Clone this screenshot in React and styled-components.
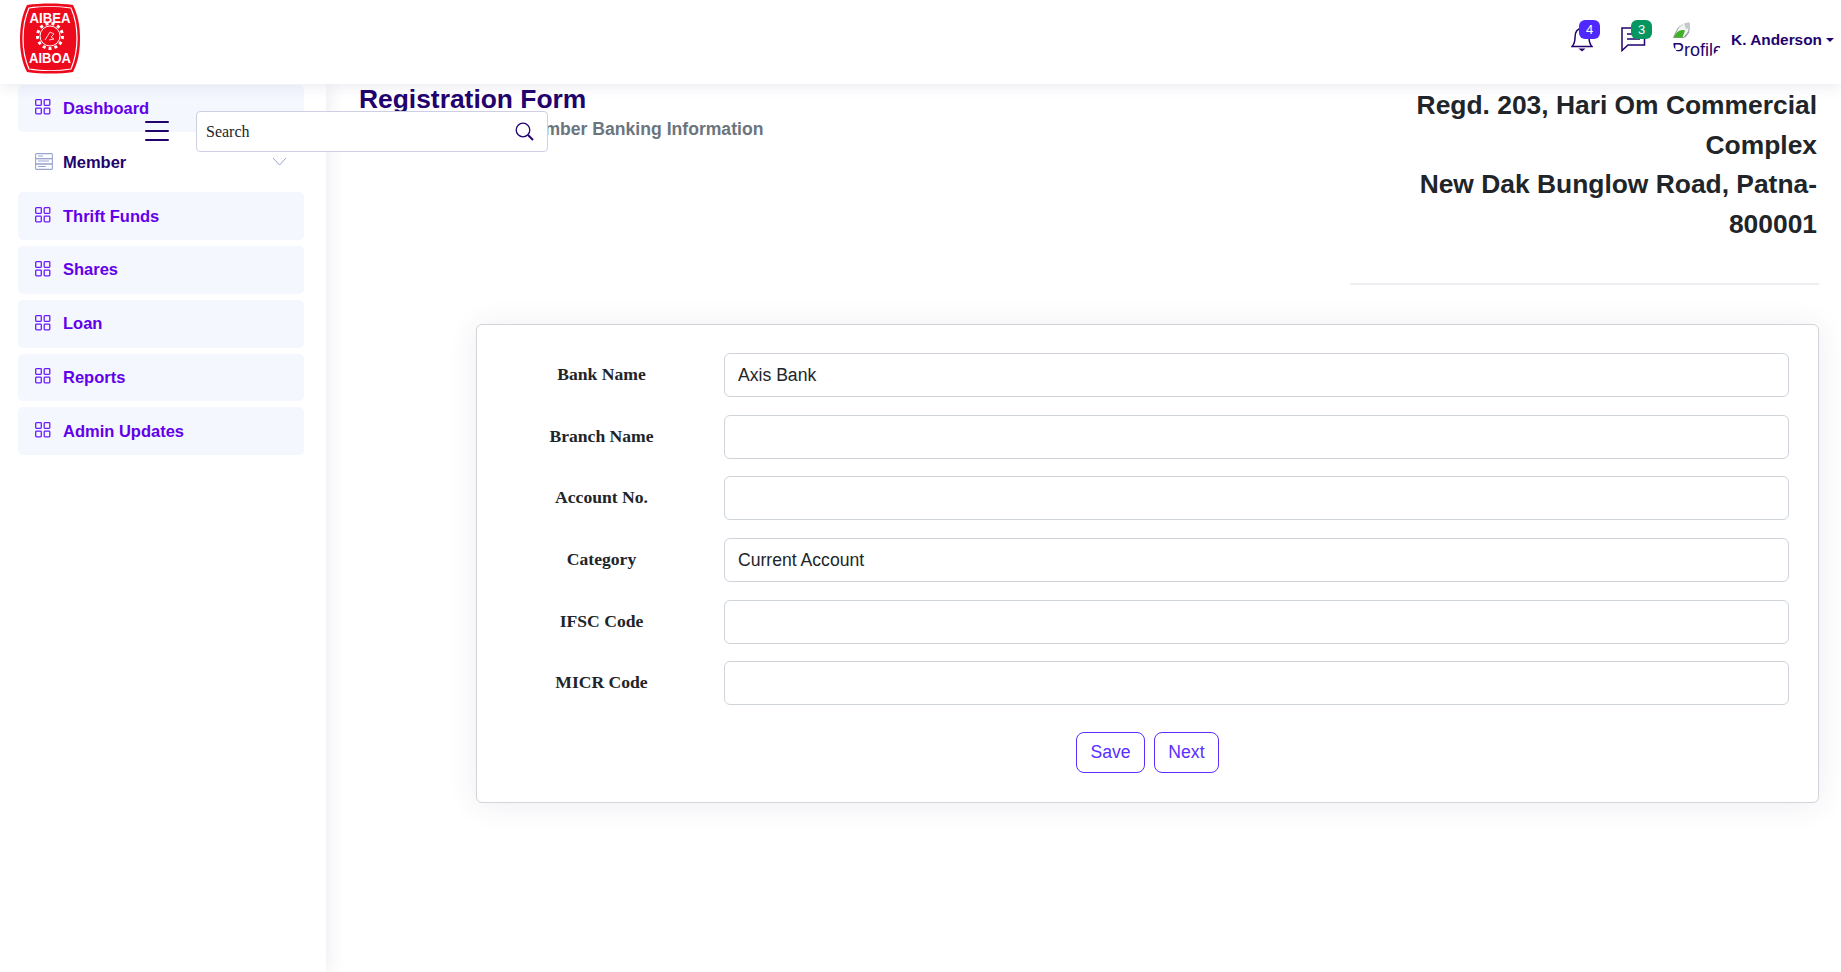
import React from "react"
import styled, { createGlobalStyle } from "styled-components"

const Global = createGlobalStyle`
  html, body { margin: 0; padding: 0; height: 100%; background: #fff; overflow: hidden; }
  * { box-sizing: border-box; }
  body { font-family: "Liberation Sans", Arial, sans-serif; color: #212529; }
`

const Page = styled.div`
  display: flex;
  flex-direction: column;
  height: 972px;
  overflow: hidden;
`

const Header = styled.header`
  position: relative;
  z-index: 10;
  flex: 0 0 84px;
  display: flex;
  align-items: center;
  justify-content: space-between;
  padding: 0 7px 0 20px;
  background: #fff;
  box-shadow: 0 2px 14px rgba(50, 50, 110, 0.1);
`

const LogoWrap = styled.div`
  display: flex;
  width: 60px;
  height: 84px;
  align-items: flex-start;
  padding-top: 3px;
`

const Burger = styled.button`
  position: absolute;
  left: 145px;
  top: 121px;
  width: 24px;
  height: 20px;
  padding: 0;
  border: 0;
  background: none;
  display: flex;
  flex-direction: column;
  justify-content: space-between;
  span { display: block; height: 2px; background: #22036e; border-radius: 1px; }
`

const SearchBox = styled.div`
  position: absolute;
  left: 196px;
  top: 111px;
  width: 352px;
  height: 41px;
  display: flex;
  align-items: center;
  justify-content: space-between;
  padding: 0 13px 0 9px;
  background: #fff;
  border: 1px solid #cfcfe4;
  border-radius: 4px;
  font-family: "Liberation Serif", serif;
  font-size: 16px;
  color: #212529;
`

const HeaderRight = styled.div`
  display: flex;
  align-items: center;
  height: 84px;
  padding-bottom: 4px;
`

const IconLink = styled.div`
  position: relative;
  width: ${p => p.$w}px;
  height: 40px;
  display: flex;
  align-items: center;
  color: #22036e;
`

const Badge = styled.span`
  position: absolute;
  top: 0;
  left: ${p => p.$left}px;
  width: 21px;
  height: 19px;
  border-radius: 6px;
  background: ${p => p.$bg};
  color: #fff;
  font-size: 13px;
  display: flex;
  align-items: center;
  justify-content: center;
`

const Avatar = styled.div`
  width: 50px;
  height: 38px;
  margin-right: 9px;
  border-radius: 50%;
  overflow: hidden;
  color: #22036e;
  font-size: 18px;
  line-height: 20px;
  white-space: nowrap;
  svg { display: block; margin: 1px 0 1px 1px; }
`

const UserName = styled.div`
  display: flex;
  align-items: center;
  gap: 4px;
  font-size: 15.4px;
  font-weight: 700;
  color: #22036e;
  &::after {
    content: "";
    border-top: 4px solid #22036e;
    border-left: 4px solid transparent;
    border-right: 4px solid transparent;
  }
`

const Body = styled.div`
  flex: 1;
  display: flex;
  min-height: 0;
`

const Sidebar = styled.aside`
  flex: 0 0 326px;
  display: flex;
  flex-direction: column;
  gap: 6px;
  padding: 0.6px 22px 0 18px;
  background: #fff;
  box-shadow: 3px 0 16px rgba(50, 50, 110, 0.09);
  position: relative;
  z-index: 1;
`

const NavItem = styled.div`
  height: 47.8px;
  display: flex;
  align-items: center;
  gap: ${p => (p.$plain ? 10 : 12)}px;
  padding: 0 17px;
  border-radius: 5px;
  background: ${p => (p.$plain ? "#fff" : "#f5f7ff")};
  color: ${p => (p.$plain ? "#22036e" : "#6200ea")};
  font-size: 16.5px;
  font-weight: 700;
  svg { position: relative; top: -1px; }
  svg:last-child:not(:first-child) { margin-left: auto; }
`

const Main = styled.main`
  flex: 1;
  min-width: 0;
  padding: 0 22px 0 33px;
`

const TopRow = styled.div`
  height: 201px;
  display: flex;
  justify-content: space-between;
`

const Titles = styled.div`
  padding-top: 0;
`

const Title = styled.h1`
  margin: -1px 0 0;
  font-size: 26.4px;
  line-height: 32px;
  font-weight: 700;
  color: #22036e;
`

const SubTitle = styled.h2`
  margin: 4px 0 0 161px;
  font-size: 17.6px;
  line-height: 21px;
  font-weight: 700;
  color: #6c757d;
`

const Address = styled.div`
  width: 469px;
  height: 201px;
  padding: 2px 2px 0 0;
  border-bottom: 2px solid #eeeef2;
  text-align: right;
  font-size: 26.4px;
  line-height: 39.6px;
  font-weight: 700;
  color: #212529;
`

const Card = styled.form`
  margin: 39px 0 0 117px;
  height: 479px;
  padding: 28px 29px 0 0;
  background: #fff;
  border: 1px solid #d3d3d8;
  border-radius: 6px;
  box-shadow: 0 2px 30px rgba(50, 50, 110, 0.09);
`

const Row = styled.div`
  display: grid;
  grid-template-columns: 247px 1fr;
  align-items: center;
  margin-bottom: 17.7px;
`

const Label = styled.label`
  font-family: "Liberation Serif", serif;
  font-size: 17.6px;
  font-weight: 700;
  text-align: center;
  color: #212529;
  padding: 0 0 1px 2px;
`

const Input = styled.input`
  height: 44px;
  width: 100%;
  padding: 0 13px;
  border: 1px solid #ced4da;
  border-radius: 6px;
  background: #fff;
  font-family: "Liberation Sans", Arial, sans-serif;
  font-size: 17.6px;
  color: #212529;
  outline: none;
`

const Actions = styled.div`
  display: flex;
  justify-content: center;
  gap: 9px;
  margin: 26.600px 0 0 29px;
`

const Btn = styled.button`
  height: 41px;
  padding: 0 13.4px;
  border: 1px solid #5a2eff;
  border-radius: 8px;
  background: #fff;
  color: #5a2eff;
  font-family: "Liberation Sans", Arial, sans-serif;
  font-size: 17.6px;
`

const GridIcon = () => (
  <svg width="16" height="16" viewBox="0 0 16 16" fill="none" stroke="#6a1bff" strokeWidth="1.3">
    <rect x="0.7" y="0.7" width="5.6" height="5.6" rx="0.8" />
    <rect x="9.2" y="0.7" width="5.6" height="5.6" rx="0.8" />
    <rect x="0.7" y="9.2" width="5.6" height="5.6" rx="0.8" />
    <rect x="9.2" y="9.2" width="5.6" height="5.6" rx="0.8" />
  </svg>
)

const ServerIcon = () => (
  <svg width="18" height="17" viewBox="0 0 18 17" fill="none" stroke="#9aa5d1" strokeWidth="1.1">
    <rect x="0.6" y="0.6" width="16.8" height="5" rx="1" />
    <rect x="0.6" y="5.6" width="16.8" height="5.4" />
    <rect x="0.6" y="11" width="16.8" height="5.4" rx="1" />
    <path d="M3 3h5M3 8h11M3 13.5h8" />
  </svg>
)

const Chevron = () => (
  <svg width="15" height="9" viewBox="0 0 15 9" fill="none" stroke="#9aa5d1" strokeWidth="1">
    <path d="M1 1l6.5 7L14 1" />
  </svg>
)

const SearchIcon = () => (
  <svg width="19" height="19" viewBox="0 0 19 19" fill="none" stroke="#22036e" strokeWidth="1.3">
    <circle cx="8" cy="8" r="6.8" />
    <path d="M13 13l5 5" strokeWidth="2" />
  </svg>
)

const Bell = () => (
  <svg width="22" height="30" viewBox="0 0 22 30" fill="none" stroke="currentColor" strokeWidth="1.5">
    <path d="M1 21.5c2-2 3-5 3-9 0-6 3-9 7-9s7 3 7 9c0 4 1 7 3 9z" />
    <path d="M7.5 23.5h7l-3.5 3z" fill="currentColor" stroke="none" />
  </svg>
)

const Chat = () => (
  <svg width="26" height="26" viewBox="0 0 26 26" fill="none" stroke="currentColor" strokeWidth="1.5">
    <path d="M1 1h22.5v17H7l-6 5.5z" />
    <path d="M6 7h13M6 12h13" />
  </svg>
)

const BrokenImage = () => (
  <svg width="17" height="17" viewBox="0 0 17 17">
    <path d="M0.5 15.500 L5 6 L11 1 H16 V9 L11 15.500 z" fill="#f2f4f2" stroke="#8f969a" strokeWidth="1" />
    <path d="M1 15.500 C3 10 7 7 12 8.500 L9.500 15.500 z" fill="#43b02a" />
    <path d="M11 1 H16 V6 L13 7 z" fill="#c3c9cd" />
    <path d="M12 15.500 L16 10" stroke="#8f969a" strokeWidth="1" />
  </svg>
)

const Logo = () => (
  <svg width="60" height="71" viewBox="0 0 60 71">
    <path d="M7 2C20 0 40 0 53 2c5 10 7 21 7 33.500s-2 24-7 33.500C40 71 20 71 7 69 2 60 0 48 0 35.500S2 12 7 2z" fill="#ee0a1d" />
    <path d="M9 5c12-2 30-2 42 0 4 9 6 19 6 30.500s-2 21-6 30.500c-12 2-30 2-42 0-4-9-6-19-6-30.500S5 14 9 5z" fill="none" stroke="#fff" strokeWidth="1.2" />
    <text x="30" y="20" textAnchor="middle" fontFamily="Liberation Sans" fontWeight="700" fontSize="14" fill="#fff" textLength="41" lengthAdjust="spacingAndGlyphs">AIBEA</text>
    <text x="30" y="60" textAnchor="middle" fontFamily="Liberation Sans" fontWeight="700" fontSize="14" fill="#fff" textLength="42" lengthAdjust="spacingAndGlyphs">AIBOA</text>
    <circle cx="30" cy="33" r="12.500" fill="none" stroke="#fff" strokeWidth="3" strokeDasharray="3 3" />
    <circle cx="30" cy="33" r="10" fill="none" stroke="#fff" strokeWidth="1" />
    <path d="M25 37l5-8 4 2-3 3 3 2-5 1" fill="none" stroke="#fff" strokeWidth="0.8" />
  </svg>
)

const fields = [
  ["Bank Name", "Axis Bank"],
  ["Branch Name", ""],
  ["Account No.", ""],
  ["Category", "Current Account"],
  ["IFSC Code", ""],
  ["MICR Code", ""],
]

const nav = ["Thrift Funds", "Shares", "Loan", "Reports", "Admin Updates"]

export default function App() {
  return (
    <Page>
      <Global />
      <Header>
        <LogoWrap><Logo /></LogoWrap>
        <Burger type="button"><span /><span /><span /></Burger>
        <SearchBox>
          Search
          <SearchIcon />
        </SearchBox>
        <HeaderRight>
          <IconLink $w={50}>
            <Bell />
            <Badge $left={8} $bg="#4f27ff">4</Badge>
          </IconLink>
          <IconLink $w={51}>
            <Chat />
            <Badge $left={10} $bg="#05975f">3</Badge>
          </IconLink>
          <Avatar>
            <BrokenImage />
            Profile
          </Avatar>
          <UserName>K. Anderson</UserName>
        </HeaderRight>
      </Header>
      <Body>
        <Sidebar>
          <NavItem><GridIcon />Dashboard</NavItem>
          <NavItem $plain><ServerIcon />Member<Chevron /></NavItem>
          {nav.map(n => (
            <NavItem key={n}><GridIcon />{n}</NavItem>
          ))}
        </Sidebar>
        <Main>
          <TopRow>
            <Titles>
              <Title>Registration Form</Title>
              <SubTitle>Member Banking Information</SubTitle>
            </Titles>
            <Address>
              Regd. 203, Hari Om Commercial Complex<br />
              New Dak Bunglow Road, Patna-800001
            </Address>
          </TopRow>
          <Card>
            {fields.map(([label, value]) => (
              <Row key={label}>
                <Label>{label}</Label>
                <Input defaultValue={value} />
              </Row>
            ))}
            <Actions>
              <Btn type="button">Save</Btn>
              <Btn type="button">Next</Btn>
            </Actions>
          </Card>
        </Main>
      </Body>
    </Page>
  )
}
